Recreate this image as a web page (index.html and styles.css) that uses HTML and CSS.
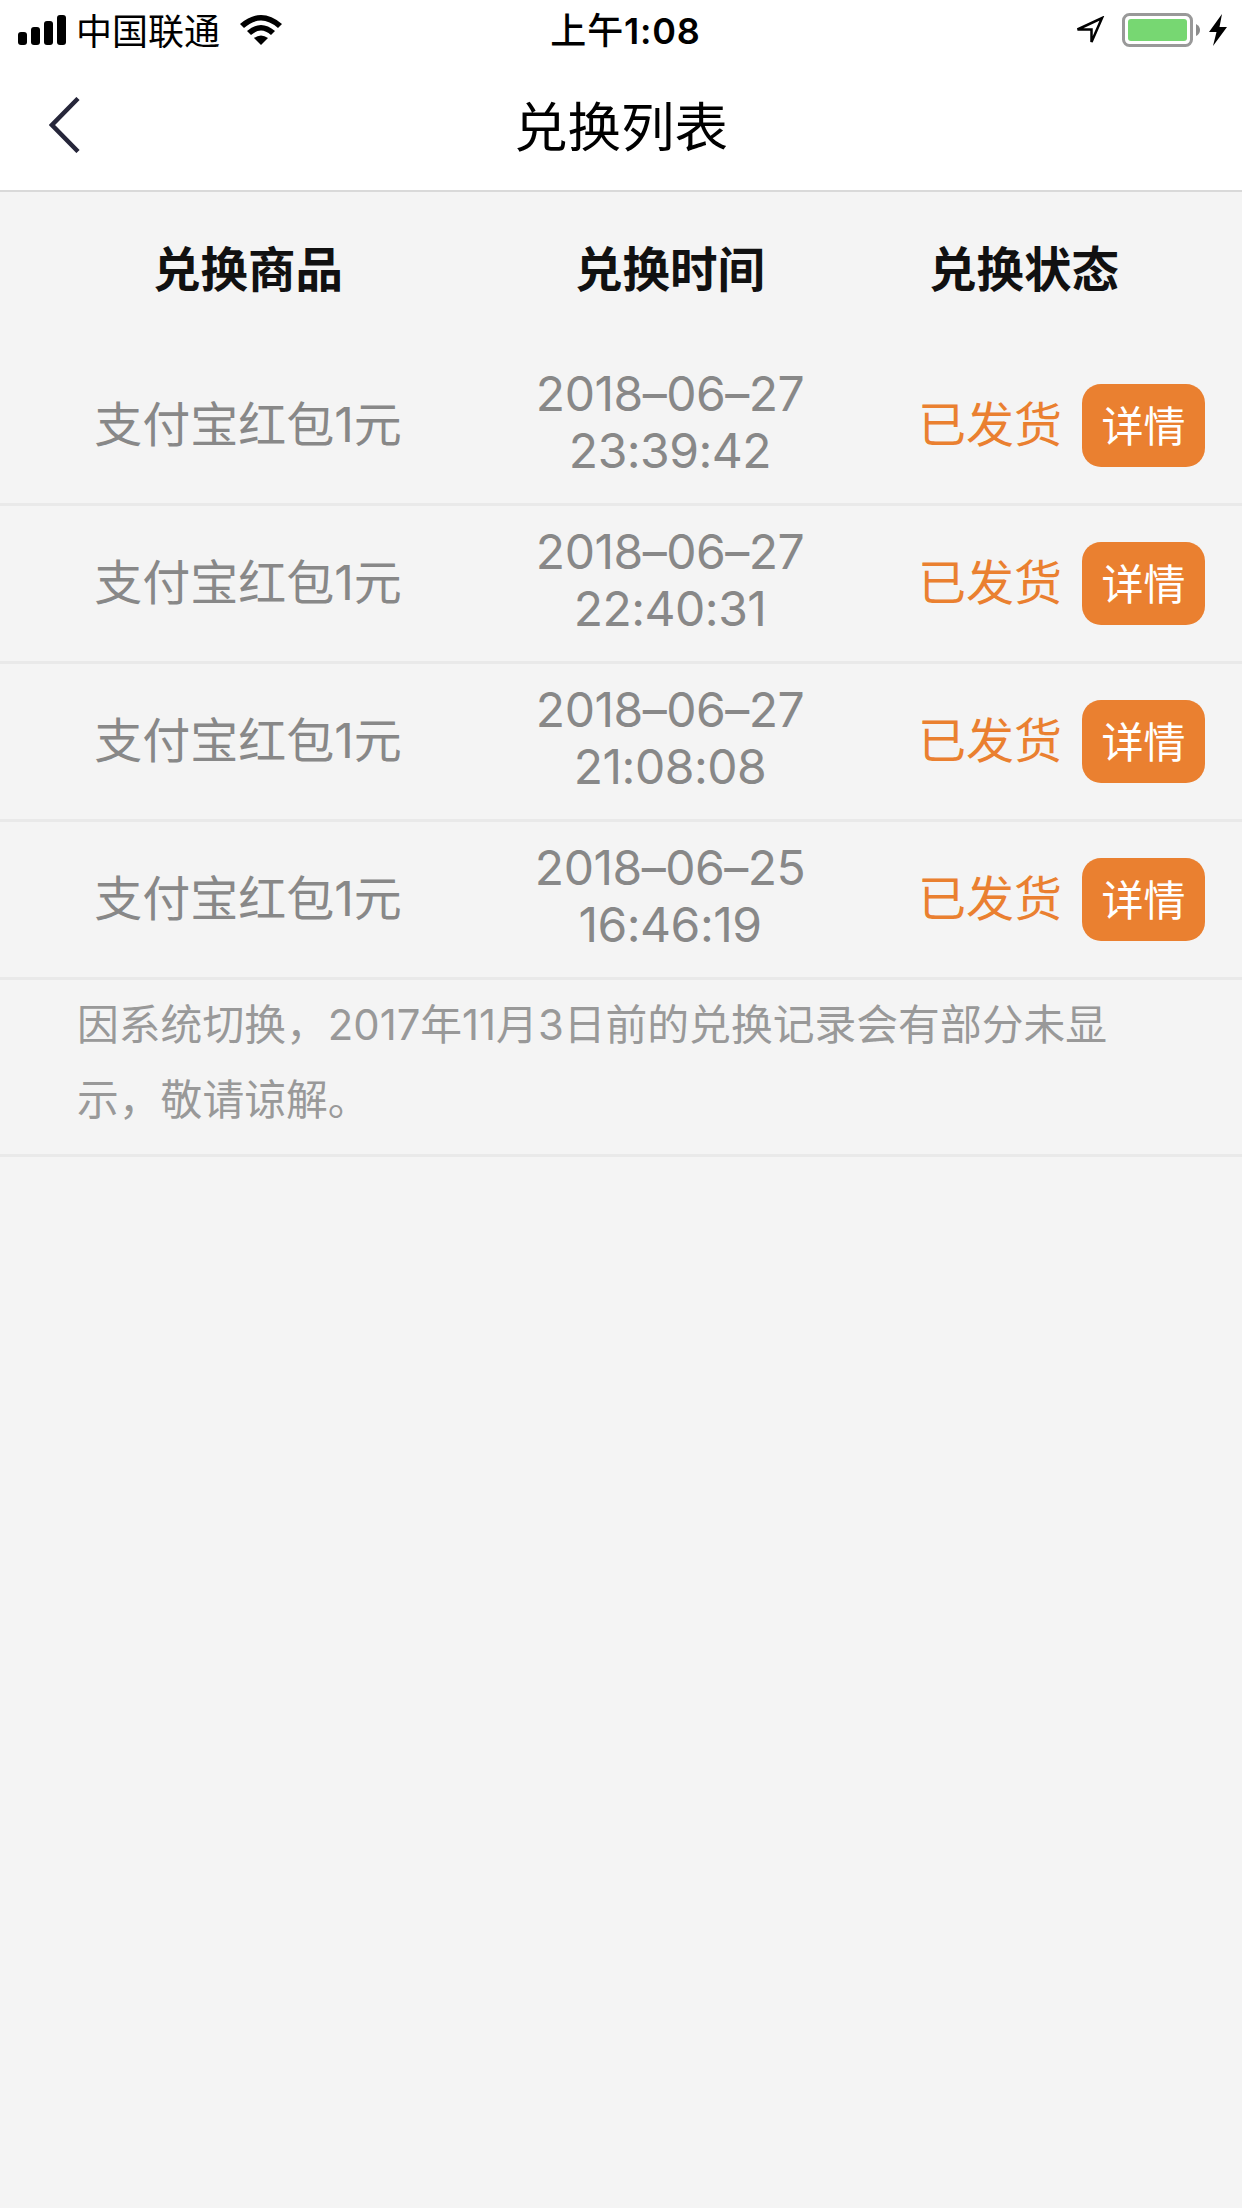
FILE: index.html
```html
<!DOCTYPE html>
<html lang="zh-CN">
<head>
    <meta charset="UTF-8">
    <meta name="viewport" content="width=device-width, initial-scale=1.0">
    <title>兑换列表</title>
    <link rel="stylesheet" href="styles.css">
</head>
<body>
    <!-- Status bar -->
    <div class="status-bar">
        <div class="status-left">
            <svg class="signal" width="48" height="30" viewBox="0 0 48 30">
                <rect x="0" y="17" width="9" height="13" rx="3"/>
                <rect x="13" y="12" width="9" height="18" rx="3"/>
                <rect x="26" y="6" width="9" height="24" rx="3"/>
                <rect x="39" y="0" width="9" height="30" rx="3"/>
            </svg>
            <span class="carrier">中国联通</span>
            <svg class="wifi" width="42" height="30" viewBox="0 0 42 30">
                <path d="M0 9Q21 -9 42 9L38 13Q21 -2 4 13Z"/>
                <path d="M7 16Q21 4 35 16L31 20Q21 11 11 20Z"/>
                <path d="M14 23Q21 18 28 23L21 30Z"/>
            </svg>
        </div>
        <div class="clock">上午<span>1:08</span></div>
        <div class="status-right">
            <svg class="location" width="30" height="30" viewBox="0 0 30 30">
                <path d="M2.5 13.5L27 2L16.500 26V13.500Z"/>
            </svg>
            <svg class="battery" width="78" height="34" viewBox="0 0 78 34">
                <rect class="battery-case" x="1.500" y="1.500" width="68" height="31" rx="6"/>
                <rect class="battery-level" x="6" y="6" width="59" height="22" rx="3"/>
                <path class="battery-tip" d="M74 11Q78 13 78 17T74 23Z"/>
            </svg>
            <svg class="bolt" width="18" height="32" viewBox="0 0 18 32">
                <path d="M13 0L0 18H7.500L4 32L18 13H10.500Z"/>
            </svg>
        </div>
    </div>

    <!-- Title bar -->
    <div class="navbar">
        <a href="#" class="back">
            <svg width="32" height="56" viewBox="0 0 32 56">
                <path d="M29 1.500L3 28L29 54.500"/>
            </svg>
        </a>
        <h1>兑换列表</h1>
    </div>

    <!-- Exchange list -->
    <div class="list">
        <div class="list-head">
            <div class="goods">兑换商品</div>
            <div class="time">兑换时间</div>
            <div class="state-title">兑换状态</div>
        </div>
        <div class="list-row">
            <div class="goods">支付宝红包1元</div>
            <div class="time">2018–06–27<br>23:39:42</div>
            <div class="state"><span>已发货</span><a href="#" class="btn">详情</a></div>
        </div>
        <div class="list-row">
            <div class="goods">支付宝红包1元</div>
            <div class="time">2018–06–27<br>22:40:31</div>
            <div class="state"><span>已发货</span><a href="#" class="btn">详情</a></div>
        </div>
        <div class="list-row">
            <div class="goods">支付宝红包1元</div>
            <div class="time">2018–06–27<br>21:08:08</div>
            <div class="state"><span>已发货</span><a href="#" class="btn">详情</a></div>
        </div>
        <div class="list-row">
            <div class="goods">支付宝红包1元</div>
            <div class="time">2018–06–25<br>16:46:19</div>
            <div class="state"><span>已发货</span><a href="#" class="btn">详情</a></div>
        </div>
        <p class="notice">因系统切换，2017年11月3日前的兑换记录会有部分未显示，敬请谅解。</p>
    </div>
</body>
</html>
```
FILE: styles.css
```css
* {
    box-sizing: border-box;
}

body {
    margin: 0;
    min-height: 2208px;
    font-family: Inter, "Noto Sans CJK SC", sans-serif;
    background-color: #f4f4f4;
    color: #111;
}

a {
    text-decoration: none;
}

svg {
    display: block;
    flex: none;
}

/* Status bar */
.status-bar {
    display: grid;
    grid-template-columns: 1fr auto 1fr;
    height: 60px;
    padding: 0 15px 0 18px;
    background-color: #fff;
    color: #000;
    font-size: 36px;
    line-height: 60px;
}

.status-left,
.status-right {
    display: flex;
    align-items: flex-start;
}

.status-left svg {
    margin-top: 15px;
}

.carrier {
    margin: 2px 20px 0 10px;
}

.clock {
    padding: 1px 0 0 6px;
    font-weight: 500;
    letter-spacing: 0.8px;
}

.clock span {
    font-weight: 600;
}

.status-right {
    justify-content: flex-end;
}

.location {
    margin: 16px 17px 0 0;
    fill: none;
    stroke: #000;
    stroke-width: 2.5;
}

.battery {
    margin-top: 13px;
}

.battery-case {
    fill: #fff;
    stroke: #999;
    stroke-width: 3;
}

.battery-level {
    fill: #77d772;
}

.battery-tip {
    fill: #8c8c8c;
}

.bolt {
    margin: 14px 0 0 9px;
}

/* Title bar */
.navbar {
    display: grid;
    grid-template-columns: 1fr auto 1fr;
    align-items: center;
    height: 132px;
    padding: 0 49px 0 49px;
    background-color: #fff;
    border-bottom: 2px solid #d9d9d9;
}

.back path {
    fill: none;
    stroke: #26263a;
    stroke-width: 4.5;
}

.navbar h1 {
    margin: 0;
    padding-top: 6px;
    color: #000;
    font-size: 53.5px;
    font-weight: 400;
    line-height: 124px;
}

/* Exchange list */
.list-head,
.list-row {
    display: grid;
    grid-template-columns: 496px 348px 398px;
    align-items: center;
    font-size: 48px;
    text-align: center;
}

.list-head {
    height: 156px;
    padding-bottom: 7px;
    font-size: 47.5px;
    font-weight: 600;
}

.state-title {
    padding-right: 38px;
}

.list-row {
    height: 158px;
    border-bottom: 3px solid #e9e9e9;
    color: #888;
}

.list-row .goods {
    padding-bottom: 1px;
    line-height: 72px;
}

.list-row .time {
    padding-bottom: 8px;
    letter-spacing: -0.5px;
    line-height: 57px;
}

.state {
    display: flex;
    justify-content: flex-end;
    align-items: center;
    padding-right: 37px;
    color: #ea8030;
    line-height: 72px;
}

.state span {
    padding-bottom: 1px;
}

.btn {
    width: 123px;
    height: 83px;
    margin-left: 20px;
    border-radius: 19px;
    background-color: #ea8030;
    color: #fff;
    font-size: 42px;
    line-height: 86px;
}

.notice {
    height: 177px;
    margin: 0;
    padding: 8px 110px 0 77px;
    border-bottom: 3px solid #e9e9e9;
    color: #999;
    font-size: 41.8px;
    line-height: 75px;
}
```
